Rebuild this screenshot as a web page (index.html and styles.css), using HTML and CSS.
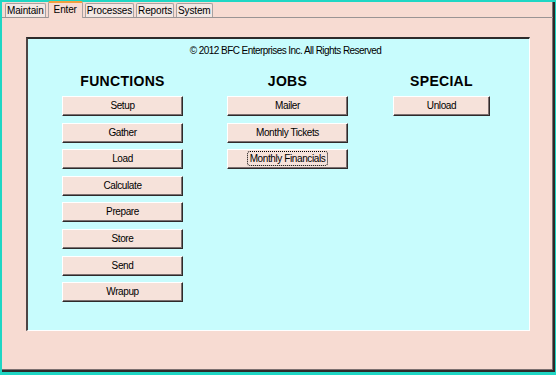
FILE: index.html
```html
<!DOCTYPE html>
<html lang="en">
<head>
  <meta charset="UTF-8">
  <title>BFC - Enter</title>
  <link rel="stylesheet" href="styles.css">
</head>
<body>
  <div class="frame">
    <div class="tabs">
      <div class="tab">Maintain</div>
      <div class="tab active">Enter</div>
      <div class="tab">Processes</div>
      <div class="tab">Reports</div>
      <div class="tab">System</div>
    </div>

    <div class="tab-body">
      <div class="panel">
        <div class="copyright">&copy; 2012 BFC Enterprises Inc. All Rights Reserved</div>

        <div class="columns">
          <div class="column functions">
            <h2>FUNCTIONS</h2>
            <button class="btn">Setup</button>
            <button class="btn">Gather</button>
            <button class="btn">Load</button>
            <button class="btn">Calculate</button>
            <button class="btn">Prepare</button>
            <button class="btn">Store</button>
            <button class="btn">Send</button>
            <button class="btn">Wrapup</button>
          </div>

          <div class="column jobs">
            <h2>JOBS</h2>
            <button class="btn">Mailer</button>
            <button class="btn">Monthly Tickets</button>
            <button class="btn"><span class="focus">Monthly Financials</span></button>
          </div>

          <div class="column special">
            <h2>SPECIAL</h2>
            <button class="btn">Unload</button>
          </div>
        </div>
      </div>
    </div>
  </div>
</body>
</html>
```

FILE: styles.css
```css
:root {
  --teal: #1fd6c4;
  --pink: #f7dbd2;
  --button-face: #f6e2da;
  --cyan: #c8fcfd;
  --dark: #2e2a2a;
  --shade: #7c7070;
}

* {
  box-sizing: border-box;
  margin: 0;
  padding: 0;
}

body {
  width: 556px;
  height: 375px;
  background: var(--teal);
  padding: 2px 1px 3px 2px;
  font-family: 'Liberation Sans', Arial, sans-serif;
  color: #000;
  overflow: hidden;
}

.frame {
  height: 100%;
  background: var(--pink);
  border-right: 2px solid var(--dark);
  border-bottom: 2px solid var(--dark);
  box-shadow: inset -1px -1px 0 var(--shade);
  display: flex;
  flex-direction: column;
}

/* Tab strip */
.tabs {
  display: flex;
  align-items: flex-end;
  gap: 2px;
  height: 16px;
  padding-left: 3px;
  border-bottom: 1px solid #9a9494;
}

.tab {
  height: 14px;
  padding: 0 1px;
  font-size: 10px;
  line-height: 13px;
  letter-spacing: -0.15px;
  background: #f3e8e4;
  border: 1px solid #a8a2a2;
  border-bottom: none;
  border-radius: 2px 2px 0 0;
}

.tab.active {
  height: 17px;
  padding: 0 5px;
  line-height: 14px;
  background: var(--pink);
  border-top: 2px solid #f0a040;
  margin-bottom: -1px;
}

/* Body */
.tab-body {
  flex: 1;
  padding: 19px 0 0 24px;
}

.panel {
  width: 504px;
  height: 294px;
  background: var(--cyan);
  border-top: 2px solid var(--dark);
  border-left: 2px solid #4e4444;
  border-right: 1px solid #fff;
  border-bottom: 1px solid #fff;
}

.copyright {
  text-align: center;
  font-size: 10px;
  letter-spacing: -0.55px;
  line-height: 12px;
  padding-top: 6px;
  padding-left: 14px;
}

.columns {
  display: flex;
  padding-left: 34px;
  margin-top: 16px;
  gap: 44px;
}

.column {
  display: flex;
  flex-direction: column;
  gap: 6.6px;
}

.functions,
.jobs {
  width: 121px;
}

.special {
  width: 97px;
  margin-left: 1px;
}

h2 {
  text-align: center;
  font-size: 14px;
  font-weight: bold;
  line-height: 16px;
  letter-spacing: 0.3px;
  margin-bottom: 0.4px;
}

.btn {
  height: 20px;
  background: var(--button-face);
  border-top: 1px solid #fff;
  border-left: 1px solid #fff;
  border-right: 1px solid var(--dark);
  border-bottom: 1px solid var(--dark);
  box-shadow: inset -1px -1px 0 var(--shade);
  font-family: 'Liberation Sans', Arial, sans-serif;
  font-size: 10px;
  letter-spacing: -0.4px;
  color: #000;
  padding: 0 0 1px;
}

.focus {
  outline: 1px dotted #000;
  outline-offset: 0;
  border-radius: 2px;
  padding: 1px 2px;
}
```
